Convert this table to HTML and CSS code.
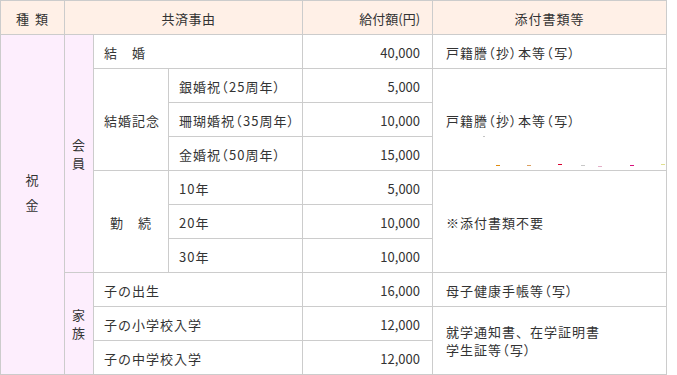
FILE: index.html
```html
<!DOCTYPE html>
<html lang="ja">
<head>
<meta charset="utf-8">
<link rel="stylesheet" href="styles.css">
</head>
<body>
<table class="benefits">
  <colgroup>
    <col class="c-kind">
    <col class="c-group">
    <col class="c-reason">
    <col class="c-sub">
    <col class="c-amount">
    <col class="c-docs">
  </colgroup>
  <thead>
    <tr>
      <th class="h-kind">種 類</th>
      <th class="h-reason" colspan="3">共済事由</th>
      <th class="h-amount">給付額(円)</th>
      <th class="h-docs">添付書類等</th>
    </tr>
  </thead>
  <tbody>
    <tr>
      <td class="kind" rowspan="10">祝<br>金</td>
      <td class="group" rowspan="7">会<br>員</td>
      <td class="reason" colspan="2">結　婚</td>
      <td class="amount">40,000</td>
      <td class="docs">戸籍謄<span class="p">（</span>抄<span class="p">）</span>本等<span class="p">（</span>写<span class="p">）</span></td>
    </tr>
    <tr>
      <td class="reason center" rowspan="3">結婚記念</td>
      <td class="sub">銀婚祝<span class="p">（</span>25周年<span class="p">）</span></td>
      <td class="amount">5,000</td>
      <td class="docs specks" rowspan="3">戸籍謄<span class="p">（</span>抄<span class="p">）</span>本等<span class="p">（</span>写<span class="p">）</span>
        <span class="speck s1"></span><span class="speck s2"></span><span class="speck s3"></span>
        <span class="dot d1"></span><span class="dot d2"></span><span class="dot d3"></span><span class="dot d4"></span><span class="dot d5"></span><span class="dot d6"></span><span class="dot d7"></span>
      </td>
    </tr>
    <tr>
      <td class="sub">珊瑚婚祝<span class="p">（</span>35周年<span class="p">）</span></td>
      <td class="amount">10,000</td>
    </tr>
    <tr>
      <td class="sub">金婚祝<span class="p">（</span>50周年<span class="p">）</span></td>
      <td class="amount">15,000</td>
    </tr>
    <tr>
      <td class="reason center" rowspan="3">勤　続</td>
      <td class="sub">10年</td>
      <td class="amount">5,000</td>
      <td class="docs" rowspan="3">※添付書類不要</td>
    </tr>
    <tr>
      <td class="sub">20年</td>
      <td class="amount">10,000</td>
    </tr>
    <tr>
      <td class="sub">30年</td>
      <td class="amount">10,000</td>
    </tr>
    <tr>
      <td class="group" rowspan="3">家<br>族</td>
      <td class="reason" colspan="2">子の出生</td>
      <td class="amount">16,000</td>
      <td class="docs">母子健康手帳等<span class="p">（</span>写<span class="p">）</span></td>
    </tr>
    <tr>
      <td class="reason" colspan="2">子の小学校入学</td>
      <td class="amount">12,000</td>
      <td class="docs two" rowspan="2">就学通知書、在学証明書<br>学生証等<span class="p">（</span>写<span class="p">）</span></td>
    </tr>
    <tr>
      <td class="reason" colspan="2">子の中学校入学</td>
      <td class="amount">12,000</td>
    </tr>
  </tbody>
</table>
</body>
</html>
```
FILE: styles.css
```css
html, body {
  margin: 0;
  padding: 0;
  background: #ffffff;
}

body {
  font-family: "Noto Sans CJK JP", "Noto Sans", sans-serif;
  font-size: 13px;
  color: #333333;
}

.benefits {
  border-collapse: collapse;
  table-layout: fixed;
  width: 667px;
  letter-spacing: 1px;
}

.c-kind { width: 64px; }
.c-group { width: 29px; }
.c-reason { width: 75px; }
.c-sub { width: 134px; }
.c-amount { width: 130px; }
.c-docs { width: 234px; }

.benefits th,
.benefits td {
  border: 1px solid #cccccc;
  height: 34px;
  box-sizing: border-box;
  padding: 1px 10px 0 10px;
  font-weight: normal;
  line-height: 17px;
  vertical-align: middle;
  text-align: left;
  white-space: nowrap;
}

.p {
  font-feature-settings: "palt";
  letter-spacing: 1.5px;
}

.benefits thead th {
  background: #fff0e7;
  text-align: center;
}

.benefits th.h-kind {
  letter-spacing: 1px;
  word-spacing: 1px;
}

.benefits th.h-reason {
  padding-left: 20px;
  letter-spacing: 0.5px;
}

.benefits th.h-amount {
  text-align: right;
  padding-right: 12px;
  letter-spacing: 0;
}

.benefits td.kind {
  background: #fdeefd;
  text-align: center;
  padding: 0 0 26px 0;
  line-height: 25px;
}

.benefits td.group {
  background: #fdeefd;
  text-align: center;
  padding: 0;
  line-height: 18px;
}

.benefits td.center {
  text-align: center;
}

.benefits td.amount {
  text-align: right;
  padding-right: 12px;
  letter-spacing: 0;
}

.benefits td.docs {
  padding-left: 13px;
}

.benefits td.two {
  line-height: 18px;
}

.benefits td.specks {
  position: relative;
}

.speck {
  position: absolute;
  width: 2px;
  height: 1px;
  background: #c4c4c4;
}
.s1 { left: 66px; top: 43px; }
.s2 { left: 100px; top: 45px; }
.s3 { left: 50px; top: 67px; }

.dot {
  position: absolute;
  width: 4px;
  height: 1px;
  top: 96px;
}
.d1 { left: 63px; background: #e08c10; }
.d2 { left: 94px; background: #dca060; }
.d3 { left: 125px; top: 95px; background: #d80030; }
.d4 { left: 148px; background: #c8c8c8; }
.d5 { left: 165px; top: 97px; background: #e4b0c8; }
.d6 { left: 197px; background: #d8107c; }
.d7 { left: 228px; top: 95px; background: #e0e090; }
```
